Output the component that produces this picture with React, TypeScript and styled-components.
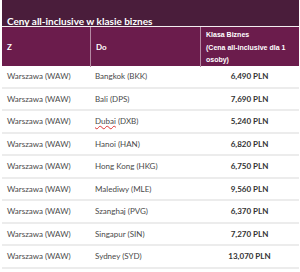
import React from 'react';
import styled, { createGlobalStyle } from 'styled-components';

type Flight = {
    from: string,
    to: string,
    price: string,
    spell?: boolean
}

const flights: Flight[] = [
    { from: 'Warszawa (WAW)', to: 'Bangkok (BKK)', price: '6,490 PLN' },
    { from: 'Warszawa (WAW)', to: 'Bali (DPS)', price: '7,690 PLN' },
    { from: 'Warszawa (WAW)', to: 'Dubai (DXB)', price: '5,240 PLN', spell: true },
    { from: 'Warszawa (WAW)', to: 'Hanoi (HAN)', price: '6,820 PLN' },
    { from: 'Warszawa (WAW)', to: 'Hong Kong (HKG)', price: '6,750 PLN' },
    { from: 'Warszawa (WAW)', to: 'Malediwy (MLE)', price: '9,560 PLN' },
    { from: 'Warszawa (WAW)', to: 'Szanghaj (PVG)', price: '6,370 PLN' },
    { from: 'Warszawa (WAW)', to: 'Singapur (SIN)', price: '7,270 PLN' },
    { from: 'Warszawa (WAW)', to: 'Sydney (SYD)', price: '13,070 PLN' },
];

const Global = createGlobalStyle`
  body {
    margin: 0;
    background: #fff;
    font-family: Lato, "Liberation Sans", sans-serif;
  }
`

export default function App() {
    return (
        <>
            <Global />
            <Table>
                <Caption>Ceny all-inclusive w klasie biznes</Caption>
                <HeadRow>
                    <HeadCell>Z</HeadCell>
                    <HeadCell>Do</HeadCell>
                    <HeadCell $arial>Klasa Biznes<br />(Cena all-inclusive dla 1 osoby)</HeadCell>
                </HeadRow>
                {flights.map((f, i) => (
                    <Row key={i}>
                        <Cell>{f.from}</Cell>
                        <Cell>
                            {f.spell
                                ? <span><Spell>Dubai</Spell> (DXB)</span>
                                : f.to}
                        </Cell>
                        <Price>{f.price}</Price>
                    </Row>
                ))}
            </Table>
        </>
    );
}

const Table = styled.div`
  margin: 0 1px 0 2px;
  width: 297px;
`
const Caption = styled.div`
  background: #4a1d3b;
  color: #fff;
  font-weight: 700;
  font-size: 10px;
  height: 27px;
  box-sizing: border-box;
  padding: 15px 0 0 5px;
  line-height: 12px;
  border-bottom: 1px solid #f2eef0;
`
const grid = `
  display: grid;
  grid-template-columns: 88px 110px 99px;
`
const HeadRow = styled.div`
  ${grid};
  background: #6b1c4c;
  height: 39px;
`
const HeadCell = styled.div<{ $arial?: boolean }>`
  color: #fff;
  font-weight: 700;
  font-size: ${p => p.$arial ? '7px' : '8px'};
  font-family: ${p => p.$arial ? '"Liberation Sans", Arial, sans-serif' : 'Lato, sans-serif'};
  line-height: ${p => p.$arial ? '12.5px' : '12px'};
  display: flex;
  align-items: center;
  padding: ${p => p.$arial ? '2px 5px 0' : '0 5px'};
  border-left: 1px solid #b48aa3;
  &:first-child { border-left: none; }
`
const Row = styled.div`
  ${grid};
  height: 22.5px;
  border-bottom: 2px solid #ececec;
  box-sizing: border-box;
`
const Cell = styled.div`
  color: #4a4a4a;
  font-size: 8px;
  display: flex;
  align-items: center;
  padding: 0 5px;
`
const Price = styled(Cell)`
  justify-content: center;
  font-weight: 700;
  color: #333;
`
const Spell = styled.span`
  text-decoration: underline wavy #d33;
  text-decoration-thickness: 1px;
`
